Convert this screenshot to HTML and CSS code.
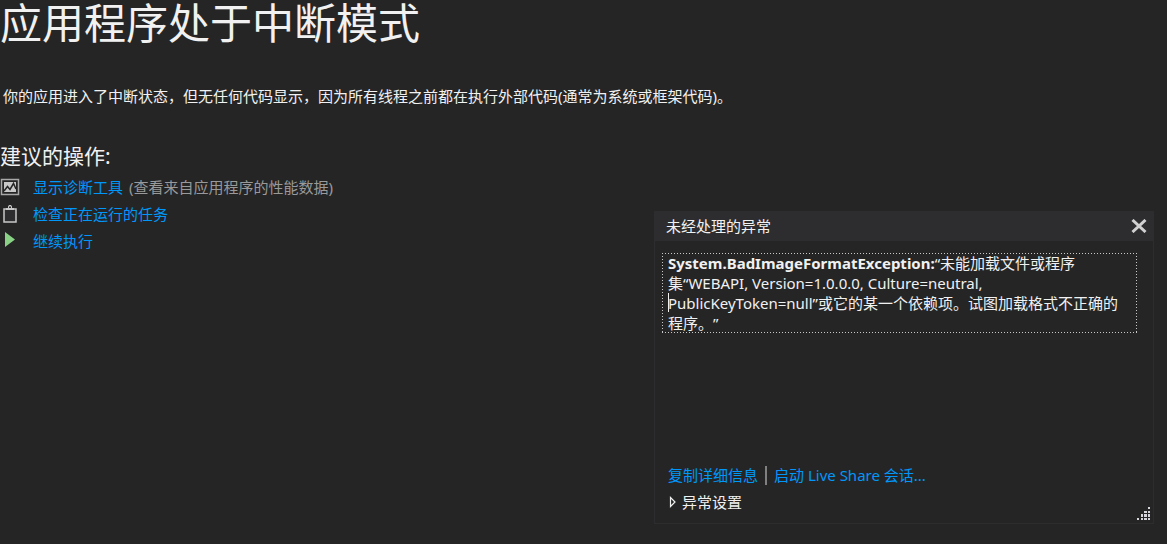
FILE: index.html
```html
<!DOCTYPE html>
<html lang="zh-CN">

<head>
    <meta charset="UTF-8">
    <meta name="viewport" content="width=device-width, initial-scale=1.0">
    <link rel="stylesheet" href="styles.css">
    <title>应用程序处于中断模式</title>
</head>

<body>
    <main>
        <h1>应用程序处于中断模式</h1>
        <p class="message">你的应用进入了中断状态，但无任何代码显示，因为所有线程之前都在执行外部代码(通常为系统或框架代码)。</p>
        <h2>建议的操作:</h2>
        <ul class="actions">
            <li>
                <svg class="icon" width="20" height="20" viewBox="0 0 20 20" aria-hidden="true">
                    <rect x="1.500" y="2.500" width="17" height="15" fill="#252526" stroke="#a8a8a8" stroke-width="1.500" />
                    <rect x="4" y="5" width="12" height="10" fill="#c8c8c8" />
                    <path d="M4 14l3.500-4.500 2.500 3 3.500-6L16 12" fill="none" stroke="#252526" stroke-width="1.500" />
                </svg>
                <a href="#">显示诊断工具</a>
                <span class="hint">(查看来自应用程序的性能数据)</span>
            </li>
            <li>
                <svg class="icon" width="20" height="20" viewBox="0 0 20 20" aria-hidden="true">
                    <rect x="4" y="5" width="12" height="13" fill="#2d2d30" stroke="#c8c8c8" stroke-width="1.500" />
                    <path d="M6 6V4h2V2.500l1-1.500h2l1 1.500V4h2v2z" fill="#c8c8c8" />
                    <rect x="9" y="2.500" width="2" height="1.500" fill="#2d2d30" />
                </svg>
                <a href="#">检查正在运行的任务</a>
            </li>
            <li>
                <svg class="icon" width="20" height="20" viewBox="0 0 20 20" aria-hidden="true">
                    <path d="M5 1l10 7.500L5 16z" fill="#89d185" />
                </svg>
                <a href="#">继续执行</a>
            </li>
        </ul>
    </main>

    <section class="popup" role="dialog" aria-labelledby="popup-title">
        <header class="popup-header">
            <span id="popup-title">未经处理的异常</span>
            <button class="close" aria-label="关闭">
                <svg width="16" height="14" viewBox="0 0 16 14">
                    <path d="M1.500 1l13 12M14.500 1l-13 12" fill="none" stroke="#d0d0d0" stroke-width="3" />
                </svg>
            </button>
        </header>
        <div class="popup-body">
            <div class="exception" tabindex="0">
                <strong>System.BadImageFormatException:</strong>“未能加载文件或程序<br>集“WEBAPI, Version=1.0.0.0, Culture=neutral,<br><span class="caret"></span>PublicKeyToken=null”或它的某一个依赖项。试图加载格式不正确的<br>程序。”
            </div>
            <div class="links">
                <a href="#">复制详细信息</a>
                <span class="separator"></span>
                <a href="#">启动 Live Share 会话...</a>
            </div>
            <details class="settings">
                <summary>
                    <svg width="8" height="12" viewBox="0 0 8 12" aria-hidden="true">
                        <path d="M1.500 1.500v9L6 6z" fill="none" stroke="#f1f1f1" stroke-width="1.200" />
                    </svg>
                    异常设置
                </summary>
            </details>
        </div>
        <svg class="grip" width="14" height="14" viewBox="0 0 14 14" aria-hidden="true">
            <path d="M11 0h2v2h-2zM11 4h2v2h-2zM7 4h3v2H7zM11 7h2v3h-2zM7 7h3v3H7zM4 7h2v3H4zM11 11h2v2h-2zM7 11h3v2H7zM4 11h2v2H4zM0 11h2v2H0z" fill="#d6d6dc" />
        </svg>
    </section>
</body>

</html>
```
FILE: styles.css
```css
body {
    margin: 0;
    background-color: #252526;
    color: #f1f1f1;
    font-family: "Noto Sans", "Noto Sans CJK SC", sans-serif;
    font-size: 15px;
    line-height: 20px;
    text-spacing-trim: space-all;
}

h1 {
    margin: 0;
    font-size: 42px;
    font-weight: 400;
    line-height: 46px;
}

h2 {
    margin: 34px 0 3px;
    font-size: 21px;
    font-weight: 400;
    line-height: 28px;
}

a {
    color: #0097fb;
    text-decoration: none;
}

a:hover {
    text-decoration: underline;
}

.message {
    margin: 38px 0 0;
    padding-left: 3px;
    line-height: 24px;
}

.actions {
    margin: 0;
    padding: 0;
    list-style: none;
}

.actions li {
    display: flex;
    align-items: center;
    height: 27px;
}

.icon {
    margin-right: 13px;
}

.hint {
    margin-left: 6px;
    color: #999999;
}

/* floating exception window */
.popup {
    position: absolute;
    right: 13px;
    bottom: 20px;
    width: 500px;
    box-sizing: border-box;
    border: 1px solid #2d2d30;
}

.popup-header {
    display: flex;
    align-items: center;
    justify-content: space-between;
    height: 27px;
    padding: 0 5px 2px 11px;
    background-color: #2d2d30;
}

.close {
    display: flex;
    padding: 1px;
    border: none;
    background: none;
}

.popup-body {
    padding: 12px 16px 11px 7px;
}

/* focus frame: 1px dots, 3px apart */
.exception {
    margin-bottom: 132px;
    padding: 0 6px;
    outline: none;
    background:
        repeating-linear-gradient(90deg, #c8c8c8 0 1px, transparent 1px 3px) top / 100% 1px no-repeat,
        repeating-linear-gradient(90deg, #c8c8c8 0 1px, transparent 1px 3px) bottom / 100% 1px no-repeat,
        repeating-linear-gradient(#c8c8c8 0 1px, transparent 1px 3px) left / 1px 100% no-repeat,
        repeating-linear-gradient(#c8c8c8 0 1px, transparent 1px 3px) right / 1px 100% no-repeat;
}

.caret {
    position: absolute;
    height: 19px;
    border-left: 1px solid #f1f1f1;
}

.links {
    display: flex;
    align-items: center;
    gap: 7px;
    padding-left: 6px;
}

.separator {
    width: 2px;
    height: 19px;
    background-color: #808080;
}

.settings {
    margin-top: 7px;
    padding-left: 7px;
}

.settings summary {
    display: flex;
    align-items: center;
    gap: 5px;
    list-style: none;
}

.grip {
    position: absolute;
    right: 2px;
    bottom: 2px;
}
```
